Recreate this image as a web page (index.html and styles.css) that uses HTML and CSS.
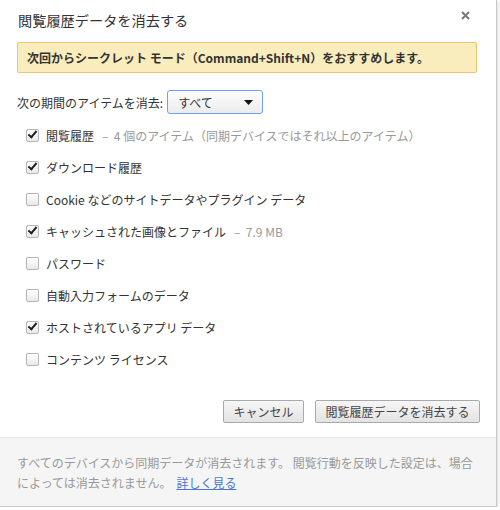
FILE: index.html
```html
<!DOCTYPE html>
<html lang="ja">
<head>
<meta charset="utf-8">
<link rel="stylesheet" href="styles.css">
</head>
<body>
<div class="dialog">
  <div class="main">
    <div class="header">
      <div class="title">閲覧履歴データを消去する</div>
      <svg class="close" width="9" height="9" viewBox="0 0 9 9"><path d="M1 1L8 8M8 1L1 8" stroke="#7a7a7a" stroke-width="2"/></svg>
    </div>
    <div class="banner">次回からシークレット モード（Command+Shift+N）をおすすめします。</div>
    <div class="period">
      <span>次の期間のアイテムを消去:</span>
      <div class="select"><span>すべて</span><svg width="9" height="5" viewBox="0 0 9 5"><path d="M0 0H9L4.5 5Z" fill="#111"/></svg></div>
    </div>
    <ul class="items">
      <li><span class="cb checked"></span><span class="label">閲覧履歴</span><span class="sub">–  4 個のアイテム（同期デバイスではそれ以上のアイテム）</span></li>
      <li><span class="cb checked"></span><span class="label">ダウンロード履歴</span></li>
      <li><span class="cb"></span><span class="label">Cookie などのサイトデータやプラグイン データ</span></li>
      <li><span class="cb checked"></span><span class="label">キャッシュされた画像とファイル</span><span class="sub">–  7.9 MB</span></li>
      <li><span class="cb"></span><span class="label">パスワード</span></li>
      <li><span class="cb"></span><span class="label">自動入力フォームのデータ</span></li>
      <li><span class="cb checked"></span><span class="label">ホストされているアプリ データ</span></li>
      <li><span class="cb"></span><span class="label">コンテンツ ライセンス</span></li>
    </ul>
    <div class="buttons">
      <button class="btn cancel">キャンセル</button>
      <button class="btn primary">閲覧履歴データを消去する</button>
    </div>
  </div>
  <div class="footer">
    <div class="fline">すべてのデバイスから同期データが消去されます。 閲覧行動を反映した設定は、場合</div>
    <div class="fline"><span>によっては消去されません。</span><a href="#">詳しく見る</a></div>
  </div>
</div>
</body>
</html>
```
FILE: styles.css
```css
html, body {
  margin: 0;
  padding: 0;
  background: #ffffff;
}
body {
  font-family: "Noto Sans CJK JP", "Noto Sans", sans-serif;
  font-size: 12px;
  color: #333;
}
.dialog {
  width: 497px;
  height: 507px;
  background: #fff;
  border-right: 1px solid #c8c8c8;
  border-bottom: 1px solid #c8c8c8;
  box-shadow: 1px 1px 3px rgba(0,0,0,0.15);
  display: flex;
  flex-direction: column;
  box-sizing: border-box;
}
.main {
  padding: 0 18px 0 17px;
  flex: 1;
}
.header {
  height: 42px;
  display: flex;
  justify-content: space-between;
  align-items: flex-start;
}
.title {
  font-size: 14.2px;
  line-height: 20px;
  padding-top: 10px;
  padding-left: 1px;
  color: #333;
}
.close {
  margin-top: 11px;
  margin-right: 8px;
}
.banner {
  height: 31px;
  box-sizing: border-box;
  background: #f9edbe;
  border: 1px solid #f0c36d;
  border-radius: 2px;
  margin-right: 1px;
  padding: 0 9px;
  font-weight: bold;
  line-height: 29px;
  color: #333;
}
.period {
  margin-top: 17px;
  height: 24px;
  display: flex;
  align-items: center;
  gap: 4px;
}
.select {
  width: 96px;
  height: 24px;
  box-sizing: border-box;
  border: 1px solid #6fa0ea;
  border-radius: 3px;
  background: linear-gradient(#fdfdfd, #ececec);
  display: flex;
  align-items: center;
  justify-content: space-between;
  padding: 0 9px 0 10px;
}
.items {
  list-style: none;
  margin: 5px 0 0 0;
  padding: 0 0 0 9px;
}
.items li {
  height: 32px;
  display: flex;
  align-items: center;
}
.cb {
  width: 13px;
  height: 13px;
  box-sizing: border-box;
  border: 1px solid #b4b4b4;
  border-radius: 2px;
  background: linear-gradient(#ffffff, #e9e9e9);
  margin-right: 7px;
  flex: none;
  position: relative;
}
.cb.checked::after {
  content: "";
  position: absolute;
  left: 3px;
  top: -1px;
  width: 3px;
  height: 7px;
  border-right: 2.5px solid #222;
  border-bottom: 2.5px solid #222;
  transform: rotate(40deg);
}
.label {
  color: #333;
}
.sub {
  color: #999;
  margin-left: 8px;
  white-space: pre;
}
.buttons {
  margin-top: 25px;
  margin-right: -2px;
  display: flex;
  justify-content: flex-end;
  gap: 11px;
}
.btn {
  height: 23px;
  font-family: inherit;
  font-size: 12px;
  color: #444;
  border: 1px solid #a9a9a9;
  border-radius: 2px;
  background: linear-gradient(#f6f6f6, #e3e3e3);
  padding: 0;
  white-space: nowrap;
  line-height: 21px;
}
.cancel { width: 81px; }
.primary { width: 165px; }
.footer {
  margin-top: 14px;
  height: 70px;
  box-sizing: border-box;
  background: #f5f5f5;
  border-top: 1px solid #e5e5e5;
  padding: 15px 20px 0 17px;
  line-height: 20px;
  color: #999;
}
.fline {
  display: flex;
  gap: 5px;
  white-space: nowrap;
}
.footer a {
  color: #4a78d0;
  text-decoration: underline;
}
```
